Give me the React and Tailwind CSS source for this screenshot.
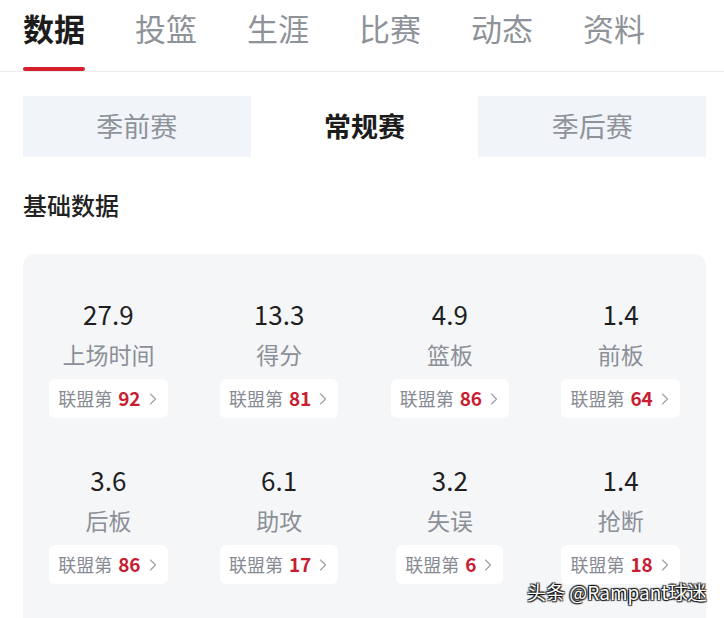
import { ChevronRight } from 'lucide-react'

const tabs = ['数据', '投篮', '生涯', '比赛', '动态', '资料']
const seasons = ['季前赛', '常规赛', '季后赛']

const stats = [
  { value: '27.9', label: '上场时间', rank: 92 },
  { value: '13.3', label: '得分', rank: 81 },
  { value: '4.9', label: '篮板', rank: 86 },
  { value: '1.4', label: '前板', rank: 64 },
  { value: '3.6', label: '后板', rank: 86 },
  { value: '6.1', label: '助攻', rank: 17 },
  { value: '3.2', label: '失误', rank: 6 },
  { value: '1.4', label: '抢断', rank: 18 },
]

function StatCell({ stat }) {
  return (
    <div className="flex flex-col items-center">
      <div className="text-[26px] leading-[30px] text-[#1f1f1f]">{stat.value}</div>
      <div className="mt-[10px] text-[23px] leading-[30px] text-[#8b8f97]">{stat.label}</div>
      <div className="mt-[10px] flex h-[39px] items-center rounded-[6px] bg-white pl-[9px] pr-[5px] text-[18px]">
        <span className="text-[#878b93]">联盟第</span>
        <span className="ml-[6px] text-[19px] font-bold text-[#c81e32]">{stat.rank}</span>
        <ChevronRight className="ml-[2px] text-[#9a9ea5]" size={20} strokeWidth={1.3} />
      </div>
    </div>
  )
}

export default function App() {
  return (
    <div className="relative h-[618px] w-[724px] overflow-hidden bg-white font-['Noto_Sans_CJK_SC',sans-serif]">
      <div className="flex h-[72px] gap-[50px] border-b border-[#ededed] pl-[23px]">
        {tabs.map((tab, i) => (
          <div key={tab} className="flex flex-col items-center pt-[12px]">
            <div
              className={
                i === 0
                  ? 'text-[31px] leading-[31px] font-bold text-[#1c1c1c]'
                  : 'text-[31px] leading-[31px] text-[#8e9299]'
              }
            >
              {tab}
            </div>
            {i === 0 && <div className="mt-[24px] h-[5px] w-[62px] rounded-full bg-[#d61f2c]" />}
          </div>
        ))}
      </div>

      <div className="ml-[23px] mr-[18px] mt-[24px] grid h-[61px] grid-cols-3 bg-[#f1f4f9]">
        {seasons.map((s, i) => (
          <div
            key={s}
            className={
              i === 1
                ? 'flex items-center justify-center bg-white text-[27px] font-bold text-[#1c1c1c]'
                : 'flex items-center justify-center text-[27px] text-[#8e9299]'
            }
          >
            {s}
          </div>
        ))}
      </div>

      <div className="mt-[33px] pl-[23px] text-[24px] leading-[30px] font-medium text-[#222]">基础数据</div>

      <div className="ml-[23px] mr-[18px] mt-[34px] grid grid-cols-4 gap-y-[47px] rounded-[12px] bg-[#f5f6f8] pt-[45px] pb-[45px]">
        {stats.map((s, i) => (
          <StatCell key={i} stat={s} />
        ))}
      </div>

      <div className="absolute left-[527px] top-[579px] text-[19px] leading-[26px] text-white [text-shadow:1px_1px_1px_rgba(0,0,0,0.85),-1px_-1px_1px_rgba(0,0,0,0.85),1px_-1px_1px_rgba(0,0,0,0.85),-1px_1px_1px_rgba(0,0,0,0.85)]">
        头条 @Rampant球迷
      </div>
    </div>
  )
}
